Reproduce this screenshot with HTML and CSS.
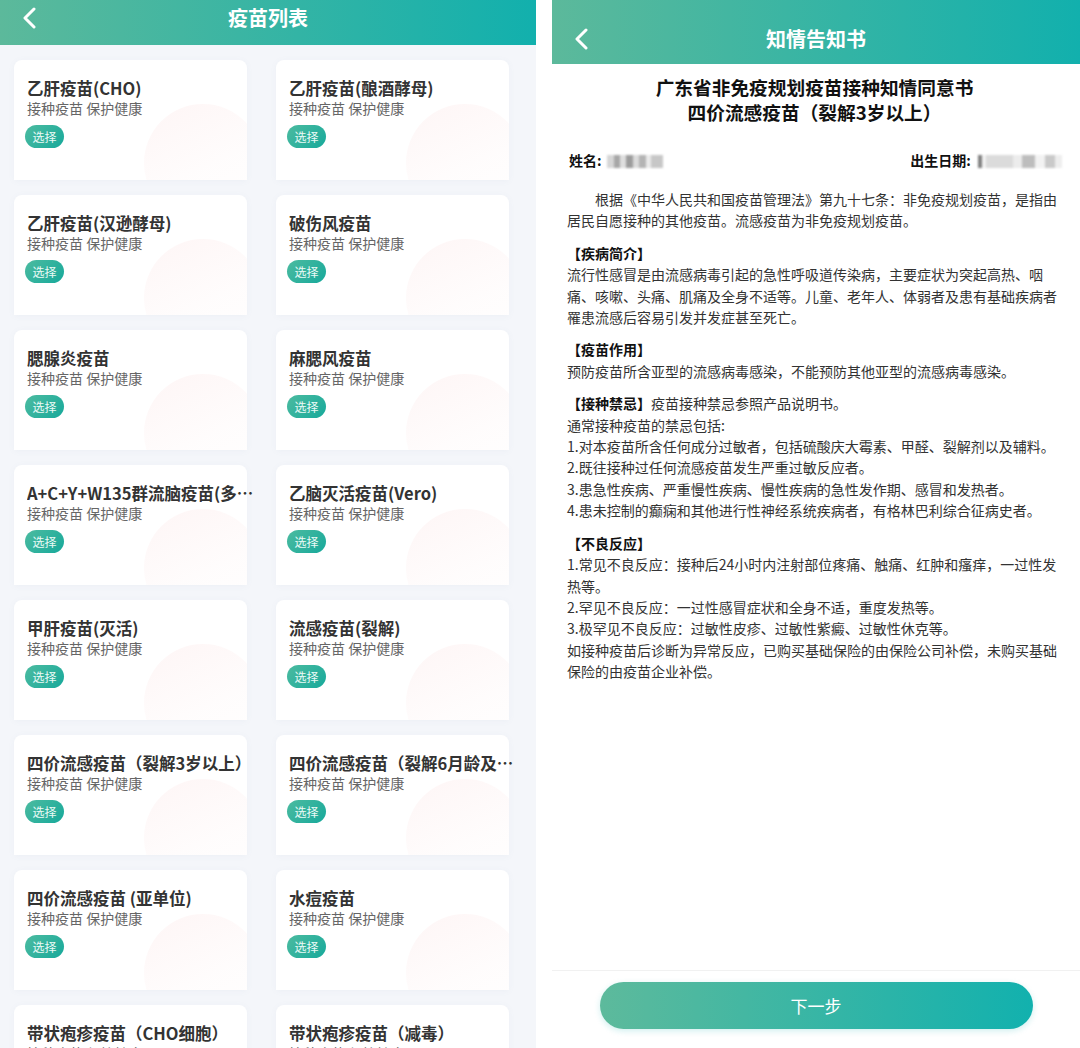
FILE: index.html
```html
<!DOCTYPE html>
<html lang="zh-CN">

<head>
    <meta charset="UTF-8">
    <meta name="viewport" content="width=device-width, initial-scale=1.0">
    <title>疫苗列表 - 知情告知书</title>
    <link rel="stylesheet" href="styles.css">
</head>

<body>
    <!-- 左边: 疫苗列表 -->
    <section class="screen screen-list">
        <header class="topbar topbar-list">
            <span class="back">
                <svg width="16" height="22" viewBox="0 0 16 22"><path d="M12 2 L3 11 L12 20" fill="none" stroke="#fff" stroke-width="3" stroke-linecap="round" stroke-linejoin="round"/></svg>
            </span>
            <h1>疫苗列表</h1>
            <span></span>
        </header>

        <div class="vaccine-grid">
            <div class="card"><span class="card-bg"></span><h3>乙肝疫苗(CHO)</h3><p>接种疫苗 保护健康</p><button>选择</button></div>
            <div class="card"><span class="card-bg"></span><h3>乙肝疫苗(酿酒酵母)</h3><p>接种疫苗 保护健康</p><button>选择</button></div>
            <div class="card"><span class="card-bg"></span><h3>乙肝疫苗(汉逊酵母)</h3><p>接种疫苗 保护健康</p><button>选择</button></div>
            <div class="card"><span class="card-bg"></span><h3>破伤风疫苗</h3><p>接种疫苗 保护健康</p><button>选择</button></div>
            <div class="card"><span class="card-bg"></span><h3>腮腺炎疫苗</h3><p>接种疫苗 保护健康</p><button>选择</button></div>
            <div class="card"><span class="card-bg"></span><h3>麻腮风疫苗</h3><p>接种疫苗 保护健康</p><button>选择</button></div>
            <div class="card"><span class="card-bg"></span><h3>A+C+Y+W135群流脑疫苗(多糖)</h3><p>接种疫苗 保护健康</p><button>选择</button></div>
            <div class="card"><span class="card-bg"></span><h3>乙脑灭活疫苗(Vero)</h3><p>接种疫苗 保护健康</p><button>选择</button></div>
            <div class="card"><span class="card-bg"></span><h3>甲肝疫苗(灭活)</h3><p>接种疫苗 保护健康</p><button>选择</button></div>
            <div class="card"><span class="card-bg"></span><h3>流感疫苗(裂解)</h3><p>接种疫苗 保护健康</p><button>选择</button></div>
            <div class="card"><span class="card-bg"></span><h3>四价流感疫苗（裂解3岁以上）</h3><p>接种疫苗 保护健康</p><button>选择</button></div>
            <div class="card"><span class="card-bg"></span><h3>四价流感疫苗（裂解6月龄及以上）</h3><p>接种疫苗 保护健康</p><button>选择</button></div>
            <div class="card"><span class="card-bg"></span><h3>四价流感疫苗 (亚单位)</h3><p>接种疫苗 保护健康</p><button>选择</button></div>
            <div class="card"><span class="card-bg"></span><h3>水痘疫苗</h3><p>接种疫苗 保护健康</p><button>选择</button></div>
            <div class="card"><span class="card-bg"></span><h3>带状疱疹疫苗（CHO细胞）</h3><p>接种疫苗 保护健康</p><button>选择</button></div>
            <div class="card"><span class="card-bg"></span><h3>带状疱疹疫苗（减毒）</h3><p>接种疫苗 保护健康</p><button>选择</button></div>
        </div>
    </section>

    <!-- 右边: 知情告知书 -->
    <section class="screen screen-notice">
        <header class="topbar topbar-notice">
            <span class="back">
                <svg width="16" height="22" viewBox="0 0 16 22"><path d="M12 2 L3 11 L12 20" fill="none" stroke="#fff" stroke-width="3" stroke-linecap="round" stroke-linejoin="round"/></svg>
            </span>
            <h1>知情告知书</h1>
            <span></span>
        </header>

        <div class="doc">
            <h2 class="doc-title">
                <span>广东省非免疫规划疫苗接种知情同意书</span>
                <span>四价流感疫苗（裂解3岁以上）</span>
            </h2>

            <div class="person">
                <div><b>姓名:</b> <span class="mosaic mosaic-name"></span></div>
                <div><b>出生日期:</b> <span class="mosaic mosaic-date"></span></div>
            </div>

            <p class="intro">根据《中华人民共和国疫苗管理法》第九十七条：非免疫规划疫苗，是指由居民自愿接种的其他疫苗。流感疫苗为非免疫规划疫苗。</p>

            <div class="block">
                <h4>【疾病简介】</h4>
                <p>流行性感冒是由流感病毒引起的急性呼吸道传染病，主要症状为突起高热、咽痛、咳嗽、头痛、肌痛及全身不适等。儿童、老年人、体弱者及患有基础疾病者罹患流感后容易引发并发症甚至死亡。</p>
            </div>

            <div class="block">
                <h4>【疫苗作用】</h4>
                <p>预防疫苗所含亚型的流感病毒感染，不能预防其他亚型的流感病毒感染。</p>
            </div>

            <div class="block">
                <p><b>【接种禁忌】</b>疫苗接种禁忌参照产品说明书。</p>
                <p>通常接种疫苗的禁忌包括:</p>
                <p>1.对本疫苗所含任何成分过敏者，包括硫酸庆大霉素、甲醛、裂解剂以及辅料。</p>
                <p>2.既往接种过任何流感疫苗发生严重过敏反应者。</p>
                <p>3.患急性疾病、严重慢性疾病、慢性疾病的急性发作期、感冒和发热者。</p>
                <p>4.患未控制的癫痫和其他进行性神经系统疾病者，有格林巴利综合征病史者。</p>
            </div>

            <div class="block">
                <h4>【不良反应】</h4>
                <p>1.常见不良反应：接种后24小时内注射部位疼痛、触痛、红肿和瘙痒，一过性发热等。</p>
                <p>2.罕见不良反应：一过性感冒症状和全身不适，重度发热等。</p>
                <p>3.极罕见不良反应：过敏性皮疹、过敏性紫癜、过敏性休克等。</p>
                <p>如接种疫苗后诊断为异常反应，已购买基础保险的由保险公司补偿，未购买基础保险的由疫苗企业补偿。</p>
            </div>
        </div>

        <footer class="notice-footer">
            <button class="next-btn">下一步</button>
        </footer>
    </section>
</body>

</html>
```

FILE: styles.css
```css
body {
    font-family: "Noto Sans CJK SC", "Noto Sans", sans-serif;
    margin: 0;
    padding: 0;
    width: 1080px;
    height: 1048px;
    overflow: hidden;
    display: flex;
    gap: 16px;
    background-color: #fff;
    color: #333;
}

.screen {
    height: 1048px;
    overflow: hidden;
}

/* top bars */
.topbar {
    display: grid;
    grid-template-columns: 60px 1fr 60px;
    background: linear-gradient(90deg, #5cb99b, #12b0ad);
    color: #fff;
}

.topbar h1 {
    margin: 0;
    text-align: center;
    font-size: 20px;
    line-height: 28px;
    font-weight: 700;
}

.topbar .back {
    display: flex;
    align-items: center;
}

.topbar-list {
    height: 45px;
    padding-top: 4px;
    box-sizing: border-box;
}

.topbar-list .back {
    height: 28px;
    padding-left: 22px;
}

.topbar-notice {
    height: 64px;
    padding-top: 25px;
    box-sizing: border-box;
}

.topbar-notice .back {
    height: 28px;
    padding-left: 22px;
}

/* vaccine list */
.screen-list {
    width: 536px;
    background-color: #f4f6fa;
}

.vaccine-grid {
    display: grid;
    grid-template-columns: 233px 233px;
    grid-auto-rows: 120px;
    column-gap: 29px;
    row-gap: 15px;
    padding: 15px 0 0 14px;
}

.card {
    position: relative;
    background-color: #fff;
    border-radius: 8px 8px 0 0;
    box-shadow: 0 1px 6px rgba(120, 140, 170, 0.06);
    padding: 17px 0 0 13px;
    box-sizing: border-box;
}

.card-bg {
    position: absolute;
    inset: 0;
    overflow: hidden;
    border-radius: inherit;
}

.card-bg::after {
    content: "";
    position: absolute;
    left: 130px;
    top: 44px;
    width: 118px;
    height: 118px;
    border-radius: 50%;
    background: linear-gradient(155deg, rgba(252, 228, 228, 0.35) 0%, rgba(253, 242, 242, 0.2) 55%, rgba(255, 255, 255, 0) 100%);
}

.card h3,
.card p,
.card button {
    position: relative;
}

.card h3 {
    margin: 0;
    width: 229px;
    font-size: 16.5px;
    line-height: 22px;
    font-weight: 700;
    color: #333;
    white-space: nowrap;
    overflow: hidden;
    text-overflow: ellipsis;
}

.card p {
    margin: 0;
    font-size: 14px;
    line-height: 18px;
    color: #666;
}

.card button {
    display: block;
    margin-top: 8px;
    margin-left: -2px;
    width: 39px;
    height: 23px;
    padding: 0;
    border: none;
    border-radius: 12px;
    background: linear-gradient(135deg, #4cbba0, #17a99b);
    color: #eafaf6;
    font-family: inherit;
    font-size: 12px;
    line-height: 23px;
}

/* notice */
.screen-notice {
    width: 528px;
    display: flex;
    flex-direction: column;
    background-color: #fff;
}

.doc {
    flex: 1;
    padding: 10px 18px 0 15px;
    font-size: 14px;
    line-height: 21.4px;
    color: #333;
}

.doc-title {
    margin: 0;
    text-align: center;
    font-size: 18.7px;
    line-height: 25px;
    font-weight: 700;
    color: #111;
}

.doc-title span {
    display: block;
}

.person {
    display: flex;
    justify-content: space-between;
    align-items: center;
    margin-top: 26px;
    padding-left: 2px;
    line-height: 20px;
    color: #111;
}

.person b {
    font-weight: 700;
}

.mosaic {
    display: inline-block;
    height: 13px;
    vertical-align: -2px;
    filter: blur(1.2px);
    opacity: 0.75;
}

.mosaic-name {
    width: 56px;
    margin-left: 2px;
    background: linear-gradient(90deg, #c9c9c9 0 12%, #8a8a8a 12% 24%, #d4d4d4 24% 34%, #7c7c7c 34% 46%, #cfcfcf 46% 58%, #9b9b9b 58% 70%, #e4e4e4 70% 78%, #b5b5b5 78% 100%);
}

.mosaic-date {
    width: 84px;
    margin-left: 4px;
    background: linear-gradient(90deg, #555 0 5%, #eee 5% 10%, #cfcfcf 10% 42%, #e6e6e6 42% 52%, #a8a8a8 52% 68%, #eee 68% 80%, #b8b8b8 80% 92%, #e8e8e8 92% 100%);
}

.intro {
    margin: 19px 0 0;
    text-indent: 2em;
}

.block {
    margin-top: 11px;
}

.block h4 {
    margin: 0;
    font-size: 14px;
    font-weight: 700;
    color: #111;
}

.block p {
    margin: 0;
}

.block b {
    color: #111;
}

.notice-footer {
    height: 78px;
    border-top: 1px solid #f1f1f1;
    display: flex;
    justify-content: center;
    padding-top: 11px;
    box-sizing: border-box;
}

.next-btn {
    width: 433px;
    height: 47px;
    border: none;
    border-radius: 24px;
    background: linear-gradient(90deg, #5dba9c, #12b1ae);
    box-shadow: 0 2px 6px rgba(18, 177, 174, 0.2);
    color: #fff;
    font-family: inherit;
    font-size: 17px;
    cursor: pointer;
}
```
